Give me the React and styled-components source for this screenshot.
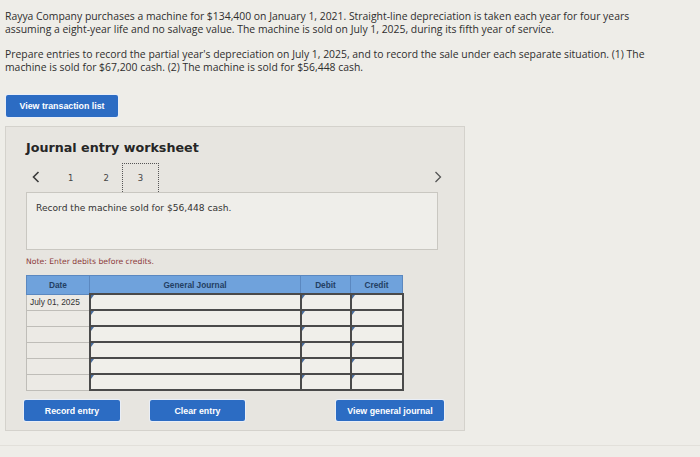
import React from 'react';
import styled, { createGlobalStyle } from 'styled-components';

const GlobalStyle = createGlobalStyle`
  html, body {
    margin: 0;
    padding: 0;
    background: #eeede8;
  }
  body {
    font-family: "Liberation Sans", Arial, sans-serif;
    color: #2b2b2b;
  }
`;

const rows = [
  { date: 'July 01, 2025' },
  { date: '' },
  { date: '' },
  { date: '' },
  { date: '' },
  { date: '' },
];

const Page = styled.div`
  width: 700px;
  height: 457px;
  overflow: hidden;
  padding: 10px 0 0 5px;
  box-sizing: border-box;
`;

const Para = styled.p`
  margin: 0 0 12px 0;
  font-family: "Open Sans", "Liberation Sans", sans-serif;
  font-size: 10.4px;
  line-height: 13px;
  color: #2e2e2e;
  white-space: nowrap;
`;

const BlueButton = styled.button`
  background: #2c6cc3;
  color: #fff;
  border: none;
  border-radius: 2px;
  font-family: "Liberation Sans", Arial, sans-serif;
  font-weight: 700;
  font-size: 8.8px;
  height: ${(p) => p.h || 21}px;
  width: ${(p) => p.w}px;
  margin-left: ${(p) => p.ml || 0}px;
  padding: 0;
  box-shadow: 0 0 0 1px #e9eef7;
`;

const TopBar = styled.div`
  margin-top: 21px;
  padding-left: 1px;
`;

const Panel = styled.div`
  margin-top: 9px;
  width: 460px;
  height: 305px;
  border: 1px solid #d4d2cc;
  background: #e7e5e0;
  box-sizing: border-box;
  padding: 13px 0 0 20px;
`;

const Heading = styled.h2`
  margin: 0;
  font-family: "DejaVu Sans", Verdana, sans-serif;
  font-weight: 700;
  font-size: 12.7px;
  color: #262626;
`;

const NavRow = styled.div`
  display: flex;
  align-items: flex-end;
  margin-top: 7px;
  height: 30px;
  width: 416px;
`;

const Chevron = styled.svg`
  width: 8px;
  height: 12px;
  align-self: center;
  margin-left: ${(p) => p.ml}px;
`;

const Step = styled.span`
  font-family: "DejaVu Sans", sans-serif;
  font-size: 8.5px;
  color: #444;
  align-self: center;
  margin-top: 2px;
  margin-left: ${(p) => p.ml}px;
`;

const ActiveStep = styled.div`
  width: 37px;
  height: 29px;
  margin-left: 13px;
  border: 1px dotted #555;
  border-bottom: none;
  display: flex;
  align-items: center;
  justify-content: center;
  font-family: "DejaVu Sans", sans-serif;
  font-size: 8.5px;
  color: #444;
  box-sizing: border-box;
`;

const Spacer = styled.div`
  flex: 1;
`;

const Instruction = styled.div`
  width: 412px;
  height: 58px;
  background: #efeeea;
  border: 1px solid #c9c7c1;
  box-sizing: border-box;
  padding: 10px 0 0 9px;
  font-family: "DejaVu Sans", Verdana, sans-serif;
  font-size: 9.1px;
  color: #333;
`;

const Note = styled.div`
  margin-top: 7px;
  font-family: "DejaVu Sans", Verdana, sans-serif;
  font-size: 7.7px;
  color: #8c3b3b;
`;

const Table = styled.table`
  margin-top: 9px;
  border-collapse: collapse;
  table-layout: fixed;
`;

const Th = styled.th`
  background: #6fa2dc;
  color: #233f63;
  font-family: "Liberation Sans", Arial, sans-serif;
  font-weight: 700;
  font-size: 8.3px;
  height: 17px;
  padding: 0;
  border: 1px solid #5b88c0;
  width: ${(p) => p.w}px;
`;

const DateCell = styled.td`
  border: 1px solid #bfbdb8;
  background: #eceae5;
  height: 15px;
  padding: 0 0 0 3px;
  font-size: 8.4px;
  color: #333;
  white-space: nowrap;
`;

const InputCell = styled.td`
  position: relative;
  border: 2px solid #4a4a4a;
  background: #f0efea;
  height: 12px;
  padding: 0;
  &::before {
    content: '';
    position: absolute;
    left: 0;
    top: 0;
    border-top: 4px solid #4a6d9c;
    border-right: 3px solid transparent;
  }
`;

const Buttons = styled.div`
  display: flex;
  margin-top: 9px;
  margin-left: -2px;
`;

const BottomLine = styled.div`
  margin-top: 14px;
  margin-left: -5px;
  width: 700px;
  border-top: 1px solid #e2e0da;
`;

export default function App() {
  return (
    <Page>
      <GlobalStyle />
      <Para>
        Rayya Company purchases a machine for $134,400 on January 1, 2021. Straight-line depreciation is taken each year for four years
        <br />
        assuming a eight-year life and no salvage value. The machine is sold on July 1, 2025, during its fifth year of service.
      </Para>
      <Para>
        Prepare entries to record the partial year&apos;s depreciation on July 1, 2025, and to record the sale under each separate situation. (1) The
        <br />
        machine is sold for $67,200 cash. (2) The machine is sold for $56,448 cash.
      </Para>
      <TopBar>
        <BlueButton w={112} h={22} type="button">View transaction list</BlueButton>
      </TopBar>
      <Panel>
        <Heading>Journal entry worksheet</Heading>
        <NavRow>
          <Chevron ml={6} viewBox="0 0 8 12">
            <path d="M6.5 1 L1.5 6 L6.5 11" fill="none" stroke="#3a3a3a" strokeWidth="1.6" />
          </Chevron>
          <Step ml={28}>1</Step>
          <Step ml={30}>2</Step>
          <ActiveStep>3</ActiveStep>
          <Spacer />
          <Chevron ml={0} viewBox="0 0 8 12">
            <path d="M1.5 1 L6.5 6 L1.5 11" fill="none" stroke="#555" strokeWidth="1.3" />
          </Chevron>
        </NavRow>
        <Instruction>Record the machine sold for $56,448 cash.</Instruction>
        <Note>Note: Enter debits before credits.</Note>
        <Table>
          <thead>
            <tr>
              <Th w={62}>Date</Th>
              <Th w={210}>General Journal</Th>
              <Th w={49}>Debit</Th>
              <Th w={51}>Credit</Th>
            </tr>
          </thead>
          <tbody>
            {rows.map((r, i) => (
              // eslint-disable-next-line react/no-array-index-key
              <tr key={i}>
                <DateCell>{r.date}</DateCell>
                <InputCell />
                <InputCell />
                <InputCell />
              </tr>
            ))}
          </tbody>
        </Table>
        <Buttons>
          <BlueButton w={96} type="button">Record entry</BlueButton>
          <BlueButton w={95} ml={30} type="button">Clear entry</BlueButton>
          <BlueButton w={108} ml={91} type="button">View general journal</BlueButton>
        </Buttons>
      </Panel>
      <BottomLine />
    </Page>
  );
}
